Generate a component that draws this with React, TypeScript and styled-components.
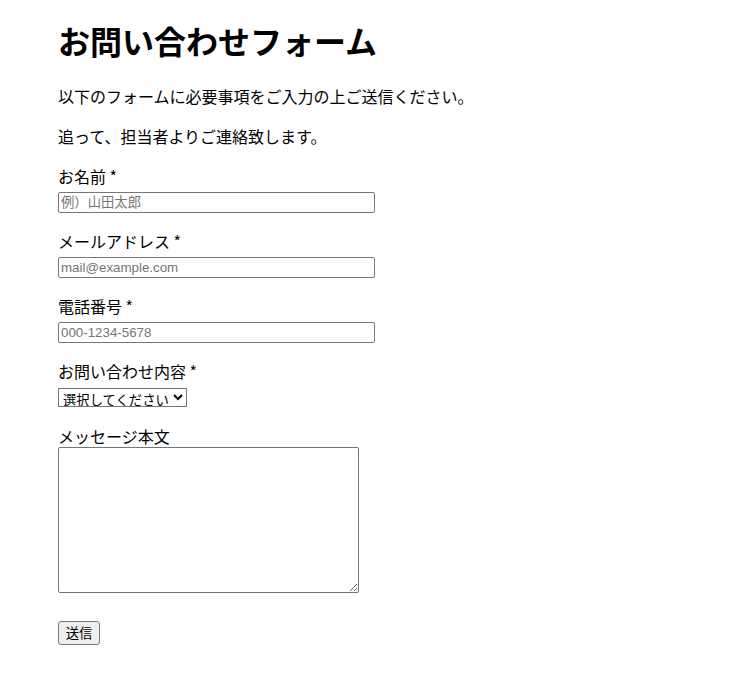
import React from 'react';
import styled, { createGlobalStyle } from 'styled-components';

const GlobalStyle = createGlobalStyle`
    body {
        margin: 0;
        background: #fff;
        color: #000;
        font-family: "Noto Sans CJK JP", "Liberation Sans", sans-serif;
    }
`;

const Page = styled.div`
    padding: 20px 58px 0;
`;

const Title = styled.h1`
    font-size: 32px;
    font-weight: 700;
    line-height: 40px;
    margin: 0 0 26px;
`;

const Lead = styled.p`
    font-size: 16px;
    line-height: 20px;
    margin: 0 0 20px;
`;

const Form = styled.form`
    display: flex;
    flex-direction: column;
    align-items: flex-start;
`;

const Field = styled.div<{ $after?: number }>`
    display: flex;
    flex-direction: column;
    align-items: flex-start;
    margin-bottom: ${(p) => p.$after ?? 18}px;
`;

const Label = styled.label<{ $gap?: number }>`
    display: block;
    font-size: 16px;
    line-height: 20px;
    margin-bottom: ${(p) => p.$gap ?? 6}px;
`;

const TextInput = styled.input`
    box-sizing: border-box;
    width: 317px;
    height: 21px;
    margin: 0;
    padding: 1px 2px;
    border: 1px solid #767676;
    border-radius: 2px;
    background: #fff;
    font-family: "Liberation Sans", "Noto Sans CJK JP", sans-serif;
    font-size: 13.33px;
    color: #000;

    &::placeholder {
        color: #757575;
    }
`;

const Select = styled.select`
    box-sizing: border-box;
    width: 129px;
    height: 19px;
    margin: 0;
    padding: 0;
    border: 1px solid #767676;
    border-radius: 0;
    background: #fff;
    font-family: "Noto Sans CJK JP", sans-serif;
    font-size: 13.33px;
    color: #000;
`;

const MessageBox = styled.textarea`
    box-sizing: border-box;
    width: 301px;
    height: 146px;
    margin: 0;
    padding: 2px;
    border: 1px solid #767676;
    border-radius: 2px;
    background: #fff;
    font-family: "Liberation Mono", monospace;
    font-size: 13.33px;
`;

const SubmitButton = styled.button`
    box-sizing: border-box;
    width: 42px;
    height: 24px;
    margin: 0;
    padding: 1px 6px;
    border: 1px solid #767676;
    border-radius: 3px;
    background: #efefef;
    font-family: "Noto Sans CJK JP", sans-serif;
    font-size: 13.33px;
    line-height: 1;
    color: #000;
`;

const ContactForm = () => {
    return (
        <Page>
            <GlobalStyle />
            <Title>お問い合わせフォーム</Title>
            <Lead>以下のフォームに必要事項をご入力の上ご送信ください。</Lead>
            <Lead>追って、担当者よりご連絡致します。</Lead>
            <Form onSubmit={(e) => e.preventDefault()}>
                <Field>
                    <Label htmlFor="name">お名前 *</Label>
                    <TextInput id="name" type="text" placeholder="例）山田太郎" />
                </Field>
                <Field>
                    <Label htmlFor="email">メールアドレス *</Label>
                    <TextInput id="email" type="email" placeholder="mail@example.com" />
                </Field>
                <Field>
                    <Label htmlFor="tel">電話番号 *</Label>
                    <TextInput id="tel" type="tel" placeholder="000-1234-5678" />
                </Field>
                <Field $after={19}>
                    <Label htmlFor="kind" $gap={7}>お問い合わせ内容 *</Label>
                    <Select id="kind" defaultValue="">
                        <option value="">選択してください</option>
                        <option value="service">サービスについて</option>
                        <option value="other">その他</option>
                    </Select>
                </Field>
                <Field $after={28}>
                    <Label htmlFor="message" $gap={1}>メッセージ本文</Label>
                    <MessageBox id="message" />
                </Field>
                <SubmitButton type="submit">送信</SubmitButton>
            </Form>
        </Page>
    );
};

export default ContactForm;
